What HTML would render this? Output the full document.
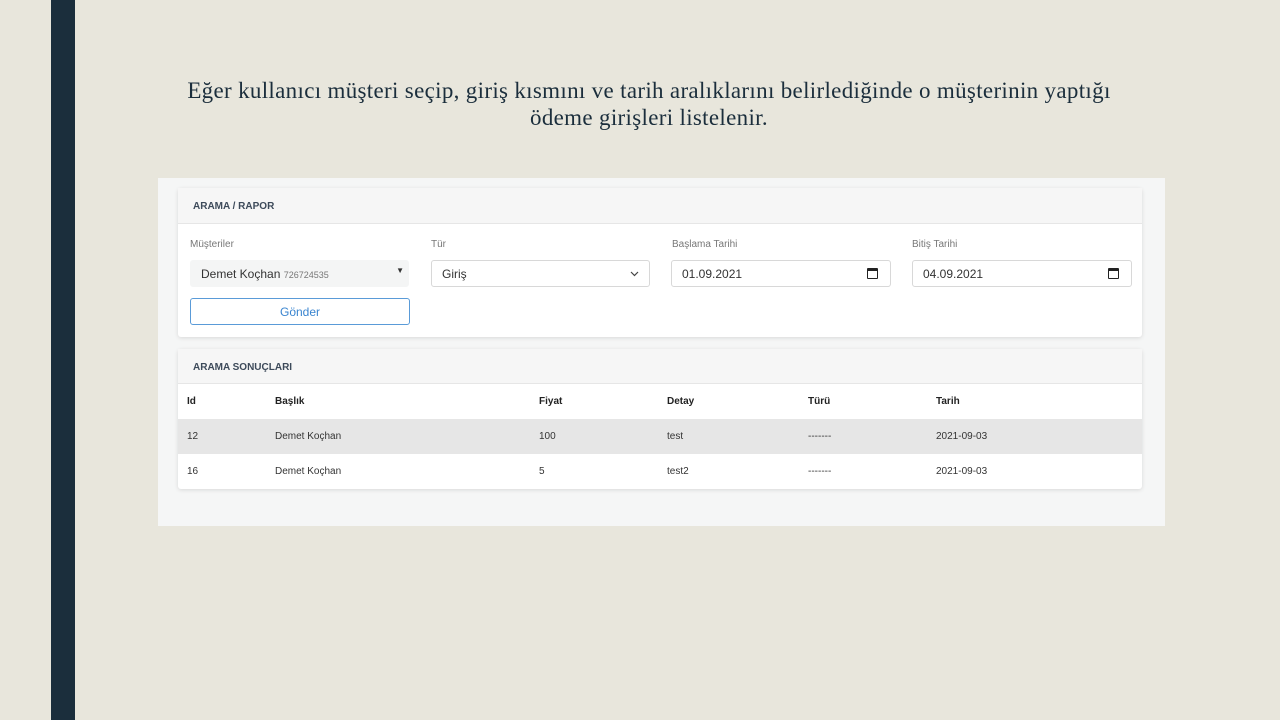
<!DOCTYPE html>
<html><head><meta charset="utf-8"><style>
*{margin:0;padding:0;box-sizing:border-box}
body{width:1280px;height:720px;background:#e8e6dc;position:relative;overflow:hidden;font-family:"Liberation Sans",sans-serif}
.bar{position:absolute;left:51px;top:0;width:24px;height:720px;background:#1b2e3c}
.title{position:absolute;left:114px;width:1070px;top:77px;text-align:center;font-family:"Liberation Serif",serif;font-size:23px;letter-spacing:0.32px;line-height:27px;color:#1b2e3c}
.shot{position:absolute;left:158px;top:178px;width:1007px;height:348px;background:#f5f6f6}
.card{position:absolute;left:20px;width:964px;background:#fff;border-radius:3px;box-shadow:0 1px 4px rgba(0,0,0,.12)}
.hd{height:36px;background:#f6f6f6;border-bottom:1px solid #e6e6e6;font-size:10px;font-weight:bold;color:#3d4a5a;padding:13px 15px}
.lbl{position:absolute;font-size:10px;color:#777}
.inp{position:absolute;height:27px;border:1px solid #d8d8d8;border-radius:3px;font-size:12px;color:#333;padding:6px 10px;background:#fff}
table{border-collapse:collapse;width:100%;font-size:10px;color:#333}
td,th{height:35px;text-align:left;padding:0 9px}
th{font-weight:bold;color:#222}
.g{background:#e6e6e6}
.cal{position:absolute;right:12px;top:7px;width:11px;height:11px;border:1.5px solid #222;border-top-width:3px;border-radius:1px}
</style></head><body>
<div class="bar"></div>
<div class="title">Eğer kullanıcı müşteri seçip, giriş kısmını ve tarih aralıklarını belirlediğinde o müşterinin yaptığı<br>ödeme girişleri listelenir.</div>
<div class="shot">
 <div class="card" style="top:10px;height:149px">
  <div class="hd">ARAMA / RAPOR</div>
  <div class="lbl" style="left:12px;top:51px">Müşteriler</div>
  <div class="lbl" style="left:253px;top:51px">Tür</div>
  <div class="lbl" style="left:494px;top:51px">Başlama Tarihi</div>
  <div class="lbl" style="left:734px;top:51px">Bitiş Tarihi</div>
  <div class="inp" style="left:12px;top:72px;width:219px;border-color:#f4f5f5;background:#f4f5f5">Demet Koçhan <span style="font-size:9px;color:#777">726724535</span><span style="position:absolute;right:4px;top:5px;font-size:8px">▼</span></div>
  <div class="inp" style="left:253px;top:72px;width:219px">Giriş<svg style="position:absolute;right:10px;top:10px" width="9" height="6"><path d="M1 1l3.5 3.5L8 1" stroke="#444" fill="none" stroke-width="1.2"/></svg></div>
  <div class="inp" style="left:493px;top:72px;width:220px">01.09.2021<span class="cal"></span></div>
  <div class="inp" style="left:734px;top:72px;width:220px">04.09.2021<span class="cal"></span></div>
  <div class="inp" style="left:12px;top:110px;width:220px;border-color:#5a9bd8;color:#3a85d0;text-align:center">Gönder</div>
 </div>
 <div class="card" style="top:171px;height:140px">
  <div class="hd" style="height:35px">ARAMA SONUÇLARI</div>
  <table>
   <tr><th style="width:88px">Id</th><th style="width:264px">Başlık</th><th style="width:128px">Fiyat</th><th style="width:141px">Detay</th><th style="width:128px">Türü</th><th>Tarih</th></tr>
   <tr class="g"><td>12</td><td>Demet Koçhan</td><td>100</td><td>test</td><td>-------</td><td>2021-09-03</td></tr>
   <tr><td>16</td><td>Demet Koçhan</td><td>5</td><td>test2</td><td>-------</td><td>2021-09-03</td></tr>
  </table>
 </div>
</div>
</body></html>
